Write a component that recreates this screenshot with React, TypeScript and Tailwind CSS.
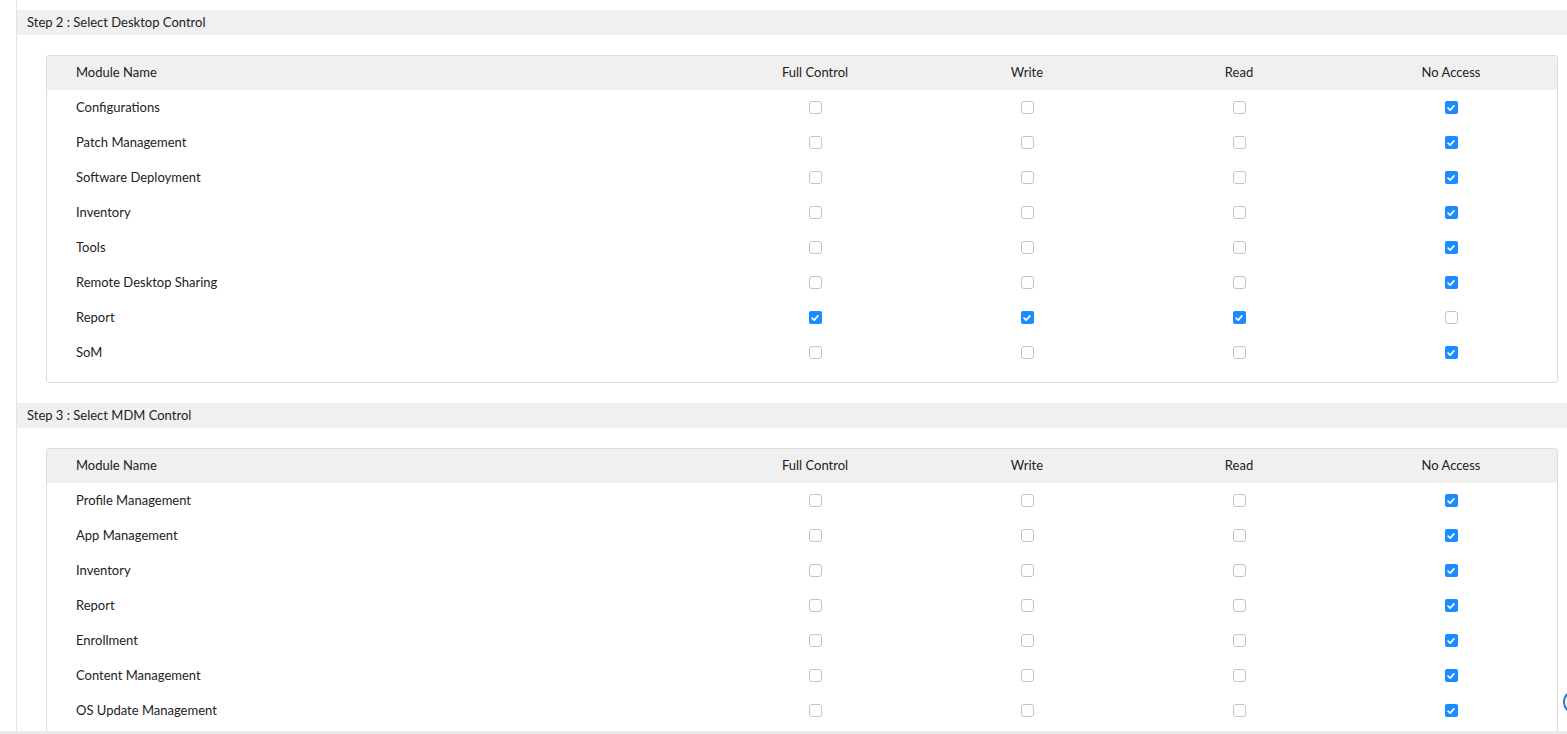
import React from "react";

const columns = ["Full Control", "Write", "Read", "No Access"];

const desktopRows: { name: string; checked: boolean[] }[] = [
  { name: "Configurations", checked: [false, false, false, true] },
  { name: "Patch Management", checked: [false, false, false, true] },
  { name: "Software Deployment", checked: [false, false, false, true] },
  { name: "Inventory", checked: [false, false, false, true] },
  { name: "Tools", checked: [false, false, false, true] },
  { name: "Remote Desktop Sharing", checked: [false, false, false, true] },
  { name: "Report", checked: [true, true, true, false] },
  { name: "SoM", checked: [false, false, false, true] },
];

const mdmRows: { name: string; checked: boolean[] }[] = [
  { name: "Profile Management", checked: [false, false, false, true] },
  { name: "App Management", checked: [false, false, false, true] },
  { name: "Inventory", checked: [false, false, false, true] },
  { name: "Report", checked: [false, false, false, true] },
  { name: "Enrollment", checked: [false, false, false, true] },
  { name: "Content Management", checked: [false, false, false, true] },
  { name: "OS Update Management", checked: [false, false, false, true] },
];

function Check({ on }: { on: boolean }) {
  if (on) {
    return (
      <span className="flex h-[13px] w-[13px] items-center justify-center rounded-[2px] bg-[#1a8cff]">
        <svg viewBox="0 0 12 12" className="h-[10px] w-[10px]">
          <path
            d="M2.5 6.2 L5 8.5 L9.5 3.5"
            fill="none"
            stroke="white"
            strokeWidth="2"
            strokeLinecap="round"
            strokeLinejoin="round"
          />
        </svg>
      </span>
    );
  }
  return (
    <span className="block h-[13px] w-[13px] rounded-[3px] border border-[#c4c4c4] bg-white" />
  );
}

function PermissionTable({ rows }: { rows: { name: string; checked: boolean[] }[] }) {
  return (
    <div className="ml-[29px] mr-[9px] overflow-hidden rounded-[3px] border border-[#dcdcdc] pb-3">
      <div className="grid h-[34px] grid-cols-[1fr_212px_212px_212px_212px] items-center bg-[#f0f0f0]">
        <div className="pl-[29px]">Module Name</div>
        {columns.map((c) => (
          <div key={c} className="text-center">
            {c}
          </div>
        ))}
      </div>
      {rows.map((r) => (
        <div
          key={r.name}
          className="grid h-[35px] grid-cols-[1fr_212px_212px_212px_212px] items-center"
        >
          <div className="pl-[29px]">{r.name}</div>
          {r.checked.map((on, i) => (
            <div key={i} className="flex justify-center">
              <Check on={on} />
            </div>
          ))}
        </div>
      ))}
    </div>
  );
}

function StepBar({ label }: { label: string }) {
  return (
    <div className="flex h-[25px] items-center bg-[#f0f0f0] pl-[10px]">{label}</div>
  );
}

export default function App() {
  return (
    <div className="relative h-[734px] overflow-hidden bg-white font-['Lato','Liberation_Sans',sans-serif] text-[13px] text-[#222]">
      <div className="ml-4 h-full border-l border-[#e3e3e3] pt-[10px]">
        <StepBar label="Step 2 : Select Desktop Control" />
        <div className="pt-5">
          <PermissionTable rows={desktopRows} />
        </div>
        <div className="pt-5">
          <StepBar label="Step 3 : Select MDM Control" />
        </div>
        <div className="pt-5">
          <PermissionTable rows={mdmRows} />
        </div>
      </div>

      {/* floating help button, mostly off-screen */}
      <span className="absolute left-[1563px] top-[690px] h-6 w-6 rounded-full border-2 border-[#1f7fd0] bg-white" />

      {/* bottom strip */}
      <div className="absolute bottom-0 left-0 h-[3px] w-full bg-[#ecebe9]" />
    </div>
  );
}
